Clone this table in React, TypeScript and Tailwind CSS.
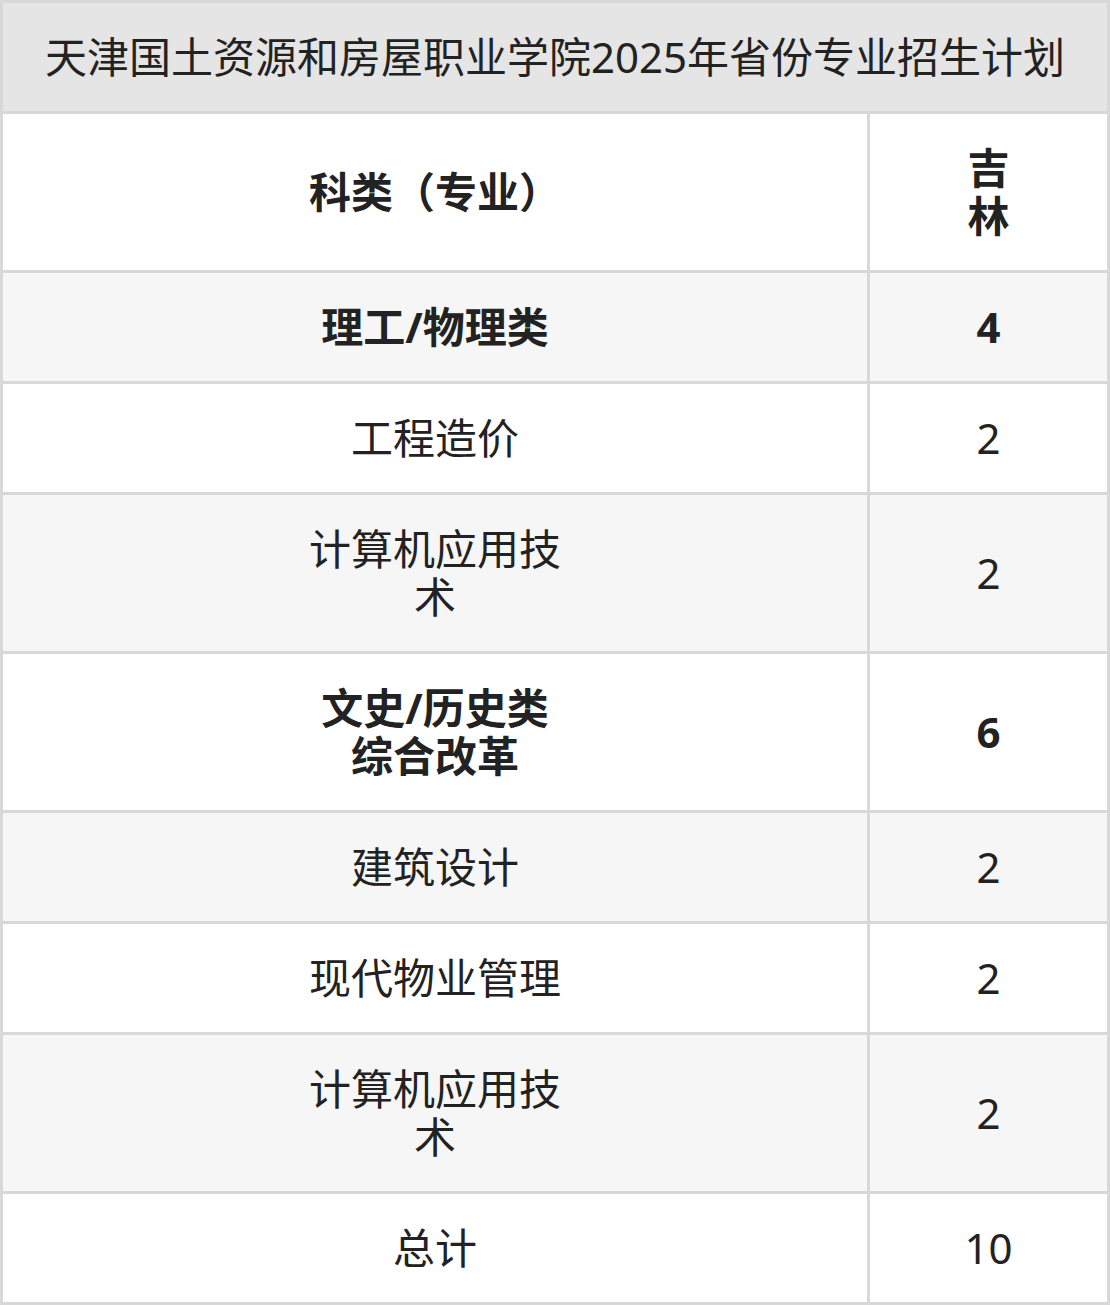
import React from "react";

type Row = { name: string; value: string; bold?: boolean; gray?: boolean };

const rows: Row[] = [
  { name: "理工/物理类", value: "4", bold: true, gray: true },
  { name: "工程造价", value: "2" },
  { name: "计算机应用技术", value: "2", gray: true },
  { name: "文史/历史类综合改革", value: "6", bold: true },
  { name: "建筑设计", value: "2", gray: true },
  { name: "现代物业管理", value: "2" },
  { name: "计算机应用技术", value: "2", gray: true },
  { name: "总计", value: "10" },
];

const font = { fontFamily: '"Noto Sans", "Noto Sans CJK SC", sans-serif' };

export default function App() {
  return (
    <div className="w-[1110px] bg-white" style={font}>
      <div className="flex flex-col gap-[3px] bg-[#d8d8d8] p-[3px] text-[#222]">
        <div className="bg-[#e5e5e5] py-[30px] text-center text-[42px] leading-[48px] whitespace-nowrap">
          天津国土资源和房屋职业学院2025年省份专业招生计划
        </div>
        <div className="grid grid-cols-[864px_237px] gap-[3px]">
          <div className="flex items-center justify-center bg-white py-[30px] text-[42px] font-bold leading-[48px]">
            <div className="mx-auto w-[264px] text-center">科类（专业）</div>
          </div>
          <div className="flex items-center justify-center bg-white py-[30px] text-[42px] font-bold leading-[48px]">
            <div className="mx-auto w-[60px] text-center">吉林</div>
          </div>
        </div>
        {rows.map((r, i) => (
          <div key={i} className="grid grid-cols-[864px_237px] gap-[3px]">
            <div
              className={`flex items-center justify-center py-[30px] text-[42px] leading-[48px] ${
                r.gray ? "bg-[#f6f6f6]" : "bg-white"
              } ${r.bold ? "font-bold" : "font-normal"}`}
            >
              <div className="mx-auto w-[264px] text-center">{r.name}</div>
            </div>
            <div
              className={`flex items-center justify-center py-[30px] text-[42px] leading-[48px] ${
                r.gray ? "bg-[#f6f6f6]" : "bg-white"
              } ${r.bold ? "font-bold" : "font-normal"}`}
            >
              <div className="mx-auto w-[60px] text-center">{r.value}</div>
            </div>
          </div>
        ))}
      </div>
    </div>
  );
}
